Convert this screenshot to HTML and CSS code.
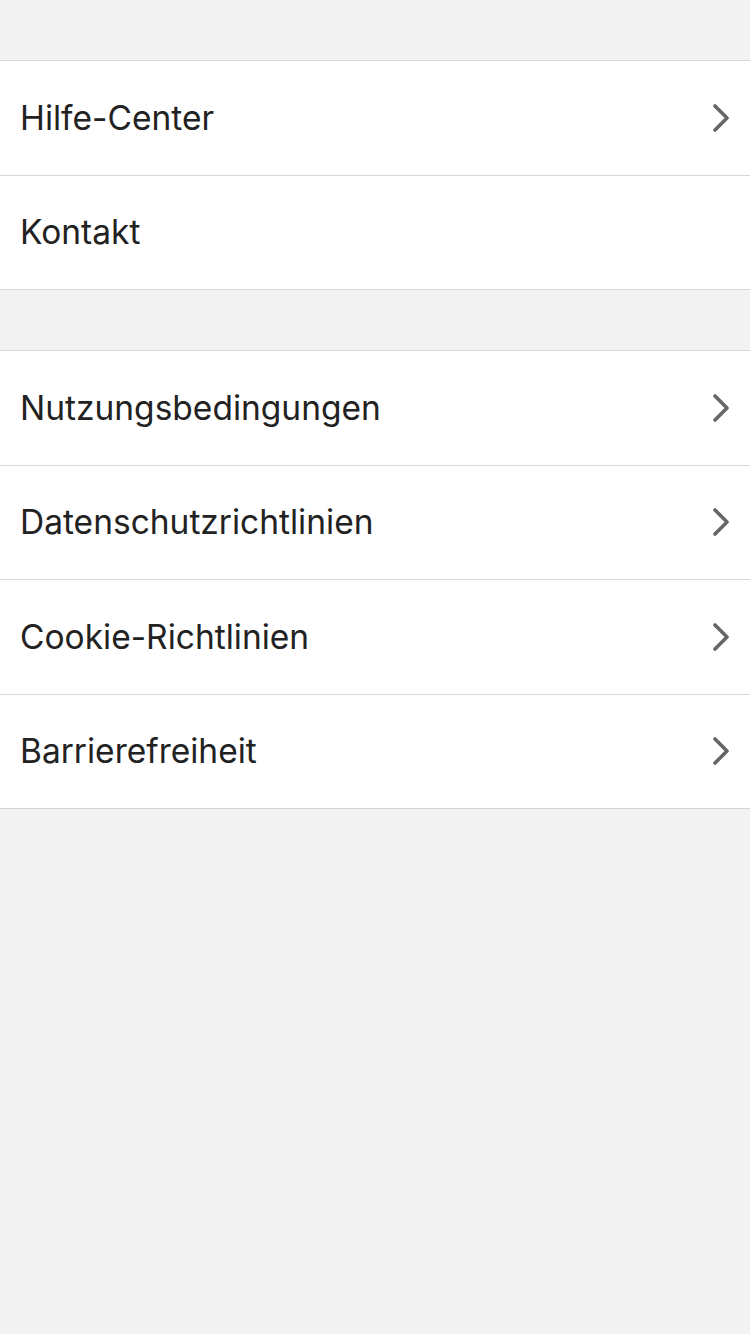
FILE: index.html
```html
<!DOCTYPE html>
<html lang="de">
<head>
<meta charset="utf-8">
<title>Einstellungen</title>
<link rel="stylesheet" href="styles.css">
</head>
<body>
<div class="page">
  <ul class="group">
    <li class="row"><span class="label">Hilfe-Center</span><svg class="chev" viewBox="0 0 16 28"><path d="M2 2 L14 14 L2 26"/></svg></li>
    <li class="row"><span class="label">Kontakt</span></li>
  </ul>
  <ul class="group">
    <li class="row"><span class="label">Nutzungsbedingungen</span><svg class="chev" viewBox="0 0 16 28"><path d="M2 2 L14 14 L2 26"/></svg></li>
    <li class="row"><span class="label">Datenschutzrichtlinien</span><svg class="chev" viewBox="0 0 16 28"><path d="M2 2 L14 14 L2 26"/></svg></li>
    <li class="row"><span class="label">Cookie-Richtlinien</span><svg class="chev" viewBox="0 0 16 28"><path d="M2 2 L14 14 L2 26"/></svg></li>
    <li class="row"><span class="label">Barrierefreiheit</span><svg class="chev" viewBox="0 0 16 28"><path d="M2 2 L14 14 L2 26"/></svg></li>
  </ul>
</div>
</body>
</html>
```
FILE: styles.css
```css
html, body {
  margin: 0;
  padding: 0;
  background: #f2f2f2;
}
.page {
  min-height: 1334px;
  padding-top: 60px;
  display: flex;
  flex-direction: column;
  gap: 60px;
  font-family: Inter, "Noto Sans", sans-serif;
}
.group {
  list-style: none;
  margin: 0;
  padding: 0;
  background: #fff;
  border-top: 1px solid #d6d6d6;
}
.row {
  box-sizing: border-box;
  height: 114.5px;
  display: flex;
  align-items: center;
  justify-content: space-between;
  padding: 0 21px 0 20px;
  border-bottom: 1px solid #d6d6d6;
}
.label {
  font-size: 33.5px;
  color: #222;
  letter-spacing: 0;
}
.chev {
  width: 16px;
  height: 28px;
  fill: none;
  stroke: #666;
  stroke-width: 3.6;
  stroke-linecap: round;
  stroke-linejoin: round;
}
```
